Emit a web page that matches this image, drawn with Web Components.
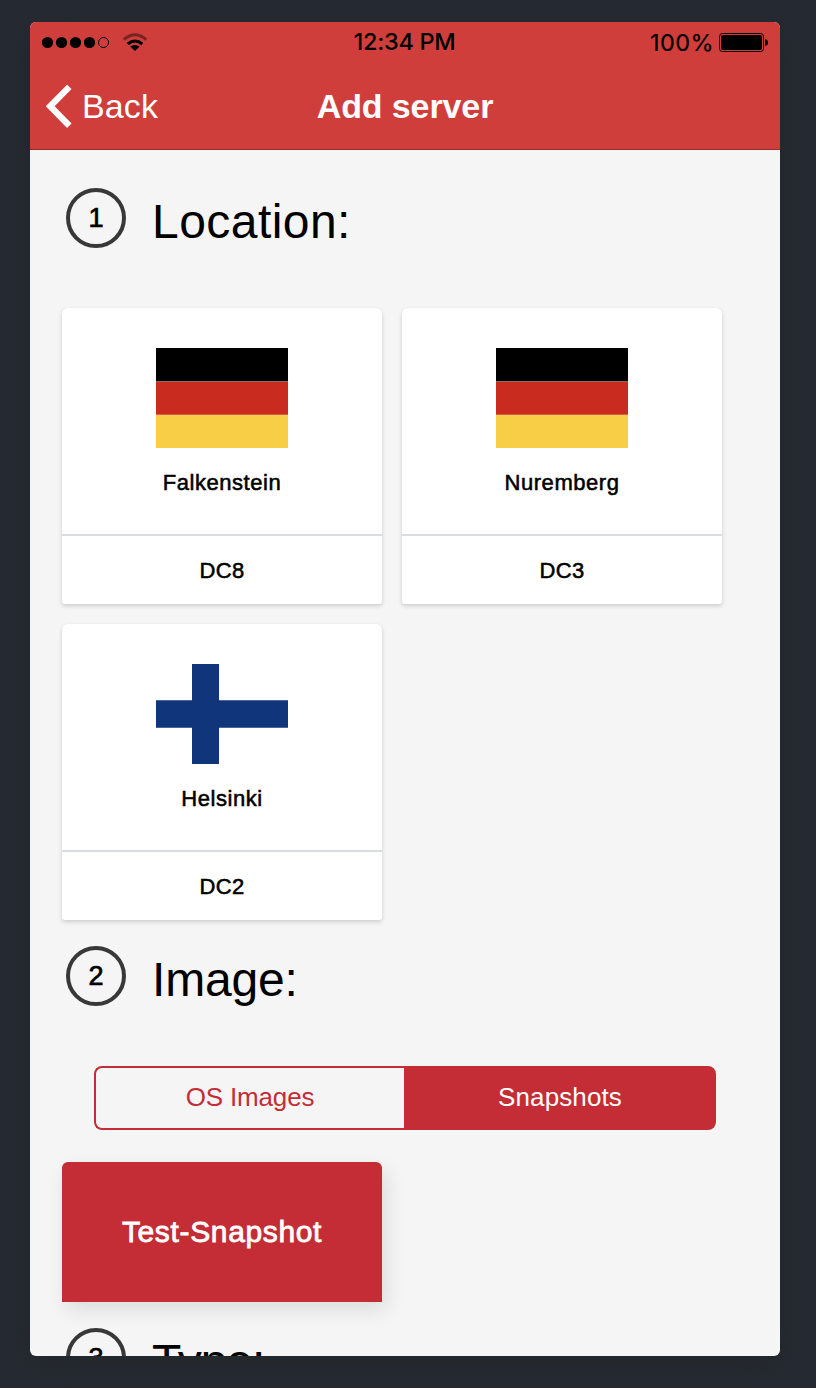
<!DOCTYPE html>
<html lang="en"><head><meta charset="utf-8"><title>Add server</title>
<style>html,body{margin:0;height:1388px;overflow:hidden;background:#262a32}body{font-family:"Liberation Sans",Arial,sans-serif}</style></head>
<body>
<phone-screen>
  <status-bar slot="bar" time="12:34 PM" battery="100%"></status-bar>
  <nav-bar slot="bar" back="Back">Add server</nav-bar>
  <step-heading number="1" style="--tracking:.45px">Location:</step-heading>
  <card-grid>
    <location-card flag="de" dc="DC8">Falkenstein</location-card>
    <location-card flag="de" dc="DC3">Nuremberg</location-card>
    <location-card flag="fi" dc="DC2">Helsinki</location-card>
  </card-grid>
  <step-heading number="2" style="--tracking:-.2px">Image:</step-heading>
  <segment-control first="OS Images" second="Snapshots"></segment-control>
  <snapshot-card>Test-Snapshot</snapshot-card>
  <step-heading number="3" style="--tracking:-1px">Type:</step-heading>
</phone-screen>
<script>
const define=(name,render)=>customElements.define(name,class extends HTMLElement{
  constructor(){super();this.attachShadow({mode:'open'});}
  connectedCallback(){this.shadowRoot.innerHTML=render(this);}
});
const attr=(el,n)=>el.getAttribute(n)||'';

define('phone-screen',()=>`<style>
:host{display:block;box-sizing:border-box;height:1388px;padding:22px 36px 32px 30px}
.screen{height:1334px;width:750px;border-radius:6px;overflow:hidden;background:#f5f5f5}
.frame{border-radius:6px;width:750px;box-shadow:0 8px 36px 2px #23282b}
header{height:127px;background:#cf3e3b;border-bottom:1px solid #96302f}
main{padding:38px 32px 0}
</style><div class="frame"><div class="screen"><header><slot name="bar"></slot></header><main><slot></slot></main></div></div>`);

define('status-bar',el=>`<style>
:host{display:grid;grid-template-columns:1fr auto 1fr;align-items:center;height:38px;padding:0 11px;color:#000;font:500 23.5px/38px Inter,sans-serif}
.left{display:flex;align-items:center}.right{display:flex;align-items:center;justify-content:flex-end}
.time{letter-spacing:-.3px;margin-left:-1px}.pct{font-weight:400;letter-spacing:.45px;margin-right:5px;padding-top:2px;-webkit-text-stroke:.2px #000}
svg{display:block}
</style><div class="left"><svg width="110" height="38" viewBox="0 1 110 38">
<g><circle cx="6.5" cy="20.500" r="5.6"/><circle cx="20.5" cy="20.500" r="5.6"/><circle cx="34.5" cy="20.500" r="5.6"/><circle cx="48.5" cy="20.500" r="5.6"/><circle cx="62.5" cy="20.500" r="5" fill="none" stroke="#000"/></g>
<g fill="none" stroke="#000"><path d="M82.700 17.700Q94 7.700 105.300 17.700" stroke-width="3" opacity=".42"/><path d="M86.700 22Q94 16 101.300 22" stroke-width="3"/></g>
<path d="M94 28.900L89.200 24.600Q94 21.300 98.800 24.600Z"/></svg></div>
<div class="time">${attr(el,'time')}</div>
<div class="right"><span class="pct">${attr(el,'battery')}</span><svg class="battery" width="50" height="20" viewBox="0 0 50 20"><rect x=".5" y="1.500" width="44" height="18" rx="3" fill="none" stroke="#000"/><rect x="2" y="3" width="41" height="15" rx="2"/><path d="M46 7Q49 7.500 49 10.500T46 14Z"/></svg></div>`);

define('nav-bar',el=>`<style>
:host{display:grid;grid-template-columns:1fr auto 1fr;align-items:center;height:91px;color:#fff;font-size:34px}
.back{display:flex;align-items:center;padding-left:16px;gap:9px;letter-spacing:.1px}.back span{padding-top:2px}
svg{display:block}h1{margin:0;padding-top:2px;font-size:34px;font-weight:700;letter-spacing:-.1px}
</style><div class="back"><svg width="27" height="44" viewBox="0 0 27 44"><path d="M23.300 2.900L4.200 22.300L23.300 41.700" fill="none" stroke="#fff" stroke-width="6.300"/></svg><span>${attr(el,'back')}</span></div><h1><slot></slot></h1>`);

define('step-heading',el=>`<style>
:host{display:flex;height:120px;padding-left:4px;gap:26px;color:#000}
.n{box-sizing:border-box;width:60px;height:60px;border:4px solid #383838;border-radius:50%;font-size:27px;line-height:53px;text-align:center;-webkit-text-stroke:.7px #000}
h2{margin:0;padding-top:4px;font-size:48px;font-weight:400;line-height:60px;letter-spacing:var(--tracking,0)}
</style><div class="n">${attr(el,'number')}</div><h2><slot></slot></h2>`);

define('card-grid',()=>`<style>:host{display:grid;grid-template-columns:320px 320px;gap:20px;margin-bottom:26px}</style><slot></slot>`);

const flags={
de:`<rect width="132" height="33" fill="#000"/><rect y="33" width="132" height="1" fill="#8c6a67"/><rect y="34" width="132" height="32.500" fill="#ca2b1f"/><rect y="66" width="132" height="1" fill="#d65c4b"/><rect y="67" width="132" height="33" fill="#f8ce46"/>`,
fi:`<rect width="132" height="100" fill="#fff"/><path d="M36 0h27v36.300h69v27.400H63V100H36V63.700H0V36.300h36z" fill="#11357b"/>`};
define('location-card',el=>`<style>
:host{display:block;height:296px;box-sizing:border-box;background:#fff;border-radius:6px 6px 3px 3px;box-shadow:0 2px 4px rgba(0,0,0,.17);color:#000;font-size:22px;text-align:center;-webkit-text-stroke:.55px #000;letter-spacing:.55px}
.top{height:226px;display:flex;flex-direction:column;align-items:center;border-bottom:2px solid #d9dde2}
svg{display:block;margin:40px 0 21px}.name{line-height:28px}.dc{line-height:70px;height:68px;letter-spacing:.3px}
</style><div class="top"><svg width="132" height="100" viewBox="0 0 132 100">${flags[attr(el,'flag')]}</svg><div class="name"><slot></slot></div></div><div class="dc">${attr(el,'dc')}</div>`);

define('segment-control',el=>`<style>
:host{display:flex;height:64px;margin:0 32px 32px;font-size:26px;line-height:59px;text-align:center;color:#c42d35}
div{box-sizing:border-box;border:2px solid #c42d35}
.off{width:310px;border-right:0;border-radius:8px 0 0 8px;letter-spacing:-.15px}
.on{flex:1;background:#c42d35;color:#fff;border-radius:0 8px 8px 0;letter-spacing:.1px}
</style><div class="off">${attr(el,'first')}</div><div class="on">${attr(el,'second')}</div>`);

define('snapshot-card',()=>`<style>
:host{display:block;width:320px;height:140px;margin-bottom:26px;background:#c42d35;border-radius:6px 6px 0 0;box-shadow:4px 8px 20px rgba(0,0,0,.1);color:#fff;font-size:30px;line-height:139px;text-align:center;letter-spacing:.65px;-webkit-text-stroke:.8px #fff}
</style><slot></slot>`);
</script></body></html>
